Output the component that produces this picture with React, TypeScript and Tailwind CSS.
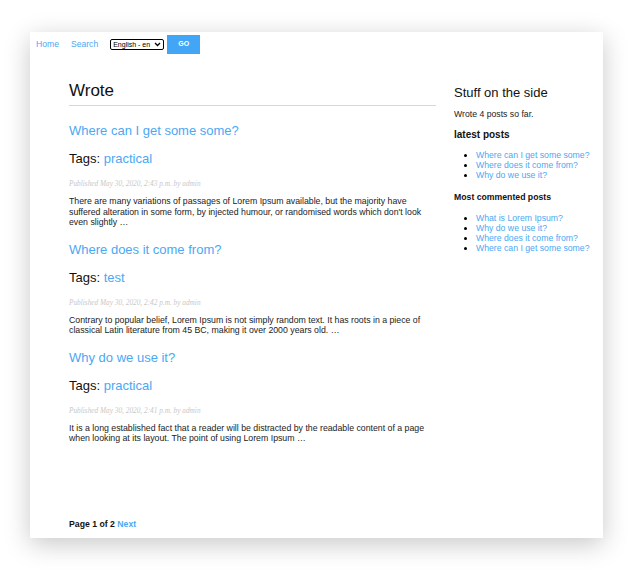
import React from "react";

const posts = [
  {
    title: "Where can I get some some?",
    tag: "practical",
    pub: "Published May 30, 2020, 2:43 p.m. by admin",
    body: "There are many variations of passages of Lorem Ipsum available, but the majority have suffered alteration in some form, by injected humour, or randomised words which don't look even slightly …",
  },
  {
    title: "Where does it come from?",
    tag: "test",
    pub: "Published May 30, 2020, 2:42 p.m. by admin",
    body: "Contrary to popular belief, Lorem Ipsum is not simply random text. It has roots in a piece of classical Latin literature from 45 BC, making it over 2000 years old. …",
  },
  {
    title: "Why do we use it?",
    tag: "practical",
    pub: "Published May 30, 2020, 2:41 p.m. by admin",
    body: "It is a long established fact that a reader will be distracted by the readable content of a page when looking at its layout. The point of using Lorem Ipsum …",
  },
];

const latest = ["Where can I get some some?", "Where does it come from?", "Why do we use it?"];
const most = ["What is Lorem Ipsum?", "Why do we use it?", "Where does it come from?", "Where can I get some some?"];

export default function App() {
  return (
    <div className="w-[642px] h-[572px] bg-white pt-[32px] pl-[30px] font-['Liberation_Sans',Arial,sans-serif] text-[#222]">
      <div className="w-[573px] h-[506px] bg-white shadow-[0_6px_24px_rgba(0,0,0,0.22)] flex flex-col">
        {/* nav */}
        <div className="flex items-center h-[19px] mt-[3px] pl-[6px] text-[8.6px]">
          <span className="text-[#4aa8f5]">Home</span>
          <span className="text-[#4aa8f5] ml-[12px]">Search</span>
          <div className="ml-[12px] w-[54px] h-[11px] border border-black rounded-[2px] flex items-center justify-between pl-[2px] pr-[2px] text-[7px] leading-none text-black">
            <span>English - en</span>
            <svg width="7" height="5" viewBox="0 0 7 5">
              <path d="M1 1 L3.5 3.5 L6 1" stroke="black" strokeWidth="1.3" fill="none" />
            </svg>
          </div>
          <div className="ml-[3px] w-[33px] h-[19px] bg-[#42a5f5] text-white font-bold text-[7px] flex items-center justify-center">
            GO
          </div>
        </div>

        <div className="flex flex-1">
          {/* main */}
          <div className="ml-[39px] w-[367px] flex flex-col">
            <h1 className="mt-[27px] text-[17px] leading-[20px] text-[#111] pb-[4px] border-b border-[#d8d8d8]">Wrote</h1>
            <div className="mt-[17px]">
              {posts.map((p, i) => (
                <div key={i} className={i > 0 ? "mt-[14px]" : ""}>
                  <div className="text-[13px] leading-[16px] text-[#4aa8f5]">{p.title}</div>
                  <div className="mt-[12px] text-[13px] leading-[16px] text-[#111]">
                    Tags: <span className="text-[#4aa8f5]">{p.tag}</span>
                  </div>
                  <div className="mt-[12px] text-[7.3px] leading-[9px] italic text-[#c8c8c8] font-['Liberation_Serif',Georgia,serif]">
                    {p.pub}
                  </div>
                  <p className="mt-[8px] text-[8.75px] leading-[10.5px] text-[#222]">{p.body}</p>
                </div>
              ))}
            </div>
            <div className="mt-auto mb-[9px] text-[8.7px] leading-[10.5px] font-bold text-[#111]">
              Page 1 of 2 <span className="text-[#4aa8f5]">Next</span>
            </div>
          </div>

          {/* sidebar */}
          <div className="ml-[18px] w-[145px]">
            <div className="mt-[31px] text-[13px] leading-[16px] text-[#111]">Stuff on the side</div>
            <div className="mt-[8px] text-[8.7px] leading-[10px] text-[#222]">Wrote 4 posts so far.</div>
            <div className="mt-[10px] text-[10px] leading-[12px] font-bold text-[#111]">latest posts</div>
            <ul className="mt-[9px] list-disc pl-[22px] text-[8.7px] leading-[10px] text-[#4aa8f5] marker:text-black">
              {latest.map((t) => (
                <li key={t}>{t}</li>
              ))}
            </ul>
            <div className="mt-[12px] text-[8.7px] leading-[10px] font-bold text-[#111]">Most commented posts</div>
            <ul className="mt-[11px] list-disc pl-[22px] text-[8.7px] leading-[10px] text-[#4aa8f5] marker:text-black">
              {most.map((t) => (
                <li key={t}>{t}</li>
              ))}
            </ul>
          </div>
        </div>
      </div>
    </div>
  );
}
